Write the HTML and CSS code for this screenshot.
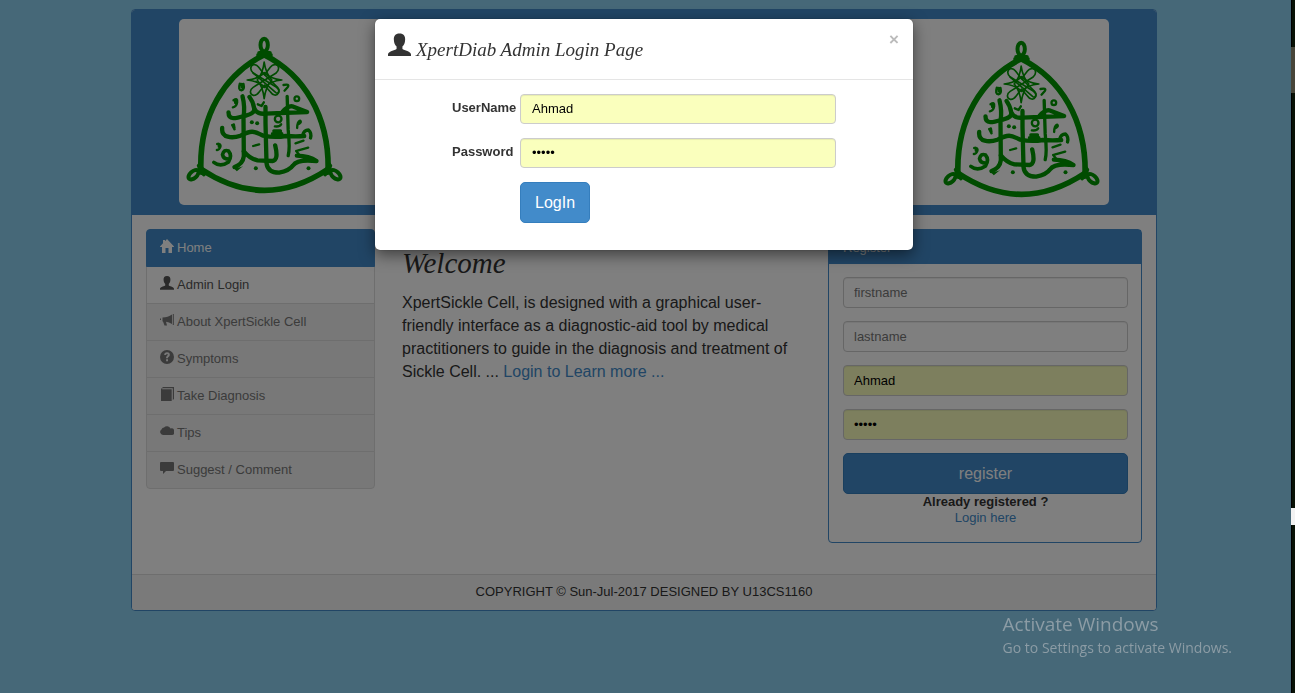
FILE: index.html
```html
<!DOCTYPE html>
<html lang="en">
<head>
<meta charset="utf-8">
<title>XpertSickle Cell</title>
<link rel="stylesheet" href="styles.css">
</head>
<body>
<svg class="sprite" aria-hidden="true">
  <symbol id="emblem" viewBox="200 109 468 474">
    <g fill="none" stroke="#009800" stroke-linecap="round" stroke-linejoin="round">
      <g stroke-width="17">
        <path d="M432 166C312 226 240 350 243 505"/>
        <path d="M434 166C554 226 626 350 625 505"/>
        <path d="M243 508Q434 636 625 508"/>
      </g>
      <g stroke-width="12">
        <ellipse cx="433" cy="136" rx="11" ry="19"/>
        <ellipse cx="221" cy="525" rx="10" ry="18" transform="rotate(48 221 525)"/>
        <ellipse cx="647" cy="525" rx="10" ry="18" transform="rotate(-48 647 525)"/>
        <path d="M418 160H450M415 166H453M240 494L252 524M237 498L245 520M628 494L616 524M631 498L624 520"/>
      </g>
      <g stroke-width="5">
        <path d="M434 225L416 202C407 190 392 194 393 207C393 213 396 216 400 220L468 279C476 284 480 273 474 264L434 225"/>
        <path d="M434 225L452 202C461 190 478 194 476 207C476 213 473 216 469 220L400 263C389 270 389 283 400 287C409 289 415 281 418 277L434 257"/>
        <path d="M434 257L452 277C458 287 471 290 476 280C480 272 475 266 469 262L400 220"/>
        <path d="M433 187Q438 222 456 241Q438 260 433 297Q429 260 412 241Q429 222 433 187Z"/>
        <path d="M382 241Q416 238 434 219Q452 238 486 241Q452 244 434 263Q416 244 382 241Z"/>
      </g>
      <g stroke-width="13">
        <path d="M368 290Q376 320 371 355L372 470Q369 494 344 502"/>
        <path d="M326 338C326 364 349 356 380 347Q406 341 403 326Q400 306 389 292"/>
        <path d="M403 326Q410 344 436 342L562 337Q540 329 517 320Q504 318 488 337"/>
        <path d="M437 322V370L440 490Q443 519 478 519Q508 514 520 497Q532 478 590 484Q568 469 531 468"/>
        <path d="M502 290L505 390Q511 448 505 468" stroke-width="10"/>
        <path d="M307 385C304 415 337 417 362 408C400 388 405 397 430 408Q465 415 498 409Q530 411 553 409"/>
        <path d="M548 408Q552 391 566 391Q576 400 572 415" stroke-width="10"/>
        <path d="M458 402H486M462 394H482" stroke-width="10"/>
        <path d="M372 455Q390 477 413 482L458 484Q477 482 466 437"/>
        <path d="M282 488Q302 504 326 487Q338 468 326 454Q312 448 308 465Q311 480 330 478" stroke-width="11"/>
      </g>
      <g stroke-width="7">
        <circle cx="475" cy="358" r="10"/>
        <circle cx="531" cy="297" r="7"/>
        <path d="M360 252Q354 271 365 272Q375 269 371 253M366 253V263"/>
        <path d="M491 256Q510 252 504 262L494 273"/>
        <path d="M341 302Q354 293 352 308Q350 321 339 323M346 302V310"/>
        <path d="M414 314L425 319L432 308M465 380Q479 382 484 374"/>
        <path d="M337 376L344 389M342 374L344 385M532 385Q532 366 541 363Q547 369 533 375"/>
        <path d="M292 433Q304 431 302 441Q298 452 291 451M297 433V441"/>
        <path d="M400 439L418 434M527 431L551 423M533 453L565 444M529 454L541 469"/>
      </g>
    </g>
    <g fill="#009800">
      <path d="M345 498Q356 508 370 499L351 515L338 502Z"/>
      <circle cx="396" cy="368" r="6"/><circle cx="412" cy="371" r="6"/>
      <circle cx="408" cy="506" r="6"/><circle cx="566" cy="506" r="6"/>
    </g>
  </symbol>
  <symbol id="user" viewBox="0 0 22 22">
    <path d="M11 0C7 0 5.400 2.500 5.600 6C5.800 9 6.500 11 8.200 12.500V14.800C5 16.600 0 17.300 0 20V21.500H22V20C22 17.300 17 16.600 13.800 14.800V12.500C15.500 11 16.200 9 16.400 6C16.600 2.500 15 0 11 0Z"/>
  </symbol>
  <symbol id="home" viewBox="0 0 14 14">
    <path d="M7 0L14 7.500V8H12V14H8.500V9H5.500V14H2V8H0V7.500L3 4.300V1H5V2.200Z"/>
  </symbol>
  <symbol id="horn" viewBox="0 0 14 14">
    <path d="M12.800 1H13.800V12H12.800ZM2.500 4.500Q8 4.500 12 1.500V11Q9 9.200 6 8.700L7 12.500H4.500L3 8.500H2.500ZM0 5.500H1V7H0Z"/>
  </symbol>
  <symbol id="help" viewBox="0 0 14 14">
    <path fill-rule="evenodd" d="M7 0A7 7 0 1 1 7 14A7 7 0 1 1 7 0ZM4.200 5H6.100Q6.200 3.900 7 3.900Q8.100 4 7.700 5L6.100 7V8.300H8V7.500L9.600 5.900Q10.600 2.300 7 2.300Q4.300 2.300 4.200 5ZM6.100 9.300V11.300H8V9.300Z"/>
  </symbol>
  <symbol id="book" viewBox="0 0 14 14">
    <path d="M3 0H14V12L12.800 13V1.200H2.200V2.200H11.700V14H1V2Z"/>
  </symbol>
  <symbol id="cloud" viewBox="0 0 14 14">
    <path d="M3 11A3 3 0 0 1 1.500 5.500A3 3 0 0 1 4 3.500A4 4 0 0 1 10.500 4.500A3.300 3.300 0 0 1 12 11Z"/>
  </symbol>
  <symbol id="comment" viewBox="0 0 14 14">
    <path d="M1 1H13Q14 1 14 2V9Q14 10 13 10H6L3 13V10H1Q0 10 0 9V2Q0 1 1 1Z"/>
  </symbol>
</svg>

<div class="page">
  <div class="panel">
    <header class="banner">
      <div class="banner-box">
        <svg class="emblem" role="img" aria-label="University emblem"><use href="#emblem"/></svg>
        <svg class="emblem emblem-end" role="img" aria-label="University emblem"><use href="#emblem"/></svg>
      </div>
    </header>
    <main class="columns">
      <nav class="menu">
        <a href="#" class="active"><svg class="icon"><use href="#home"/></svg>Home</a>
        <a href="#" class="enabled"><svg class="icon"><use href="#user"/></svg>Admin Login</a>
        <a href="#"><svg class="icon"><use href="#horn"/></svg>About XpertSickle Cell</a>
        <a href="#"><svg class="icon"><use href="#help"/></svg>Symptoms</a>
        <a href="#"><svg class="icon"><use href="#book"/></svg>Take Diagnosis</a>
        <a href="#"><svg class="icon"><use href="#cloud"/></svg>Tips</a>
        <a href="#"><svg class="icon"><use href="#comment"/></svg>Suggest / Comment</a>
      </nav>
      <section class="intro">
        <h1>Welcome</h1>
        <p>XpertSickle Cell, is designed with a graphical user-friendly interface as a diagnostic-aid tool by medical practitioners to guide in the diagnosis and treatment of Sickle Cell. ... <a href="#">Login to Learn more ...</a></p>
      </section>
      <section class="signup">
        <h2>Register</h2>
        <form class="signup-form">
          <input class="field" type="text" placeholder="firstname" aria-label="First name">
          <input class="field" type="text" placeholder="lastname" aria-label="Last name">
          <input class="field filled" type="text" value="Ahmad" aria-label="Username">
          <input class="field filled" type="password" value="ahmad" aria-label="Password">
          <div class="signup-end">
            <button class="button" type="button">register</button>
            <strong>Already registered ?</strong>
            <a href="#">Login here</a>
          </div>
        </form>
      </section>
    </main>
    <footer class="footer">COPYRIGHT © Sun-Jul-2017 DESIGNED BY U13CS1160</footer>
  </div>
</div>

<div class="backdrop"></div>
<div class="modal" role="dialog" aria-labelledby="login-title">
  <div class="modal-head">
    <svg class="title-icon"><use href="#user"/></svg>
    <h2 id="login-title">XpertDiab Admin Login Page</h2>
    <button class="close" type="button" aria-label="Close">×</button>
  </div>
  <form class="login-form">
    <label for="user-name">UserName</label>
    <input class="field filled" id="user-name" type="text" value="Ahmad">
    <label for="pass">Password</label>
    <input class="field filled" id="pass" type="password" value="ahmad">
    <button class="button" type="button">LogIn</button>
  </form>
</div>

<aside class="watermark">
  <div class="watermark-title">Activate Windows</div>
  <div>Go to Settings to activate Windows.</div>
</aside>
<div class="edge"><div class="edge-thumb"></div><div class="edge-mark"></div></div>
</body>
</html>
```
FILE: styles.css
```css
* { box-sizing: border-box; }

body {
  margin: 0;
  min-height: 100vh;
  background: #8cd0f0;
  color: #333;
  font: 13px/18px "Liberation Sans", Arial, sans-serif;
}

a { color: #428bca; text-decoration: none; }
svg { fill: currentColor; }
.sprite { position: absolute; width: 0; height: 0; }

.page { padding: 9px 7px 0 0; }

.panel {
  max-width: 1026px;
  margin: 0 auto;
  overflow: hidden;
  background: #fff;
  border: 1px solid #428bca;
  border-radius: 4px;
}

.banner { padding: 9px 47px 10px; background: #428bca; }

.banner-box {
  display: flex;
  justify-content: space-between;
  align-items: flex-start;
  padding: 17px 9px 7px 7px;
  background: #fff;
  border-radius: 5px;
}

.emblem { width: 157px; height: 158px; }
.emblem-end { margin-top: 4px; }

.columns {
  display: grid;
  grid-template-columns: 229fr 399fr 314fr;
  gap: 27px;
  align-items: start;
  padding: 14px 14px 31px;
}

.menu { display: flex; flex-direction: column; }

.menu a {
  display: flex;
  align-items: flex-start;
  gap: 3px;
  margin-bottom: -1px;
  padding: 9px 13px;
  background: #f0f0f0;
  border: 1px solid #ddd;
  color: #777;
}

.menu a:first-child { border-radius: 4px 4px 0 0; }
.menu a:last-child { margin-bottom: 0; border-radius: 0 0 4px 4px; }
.menu .active { z-index: 1; background: #428bca; border-color: #428bca; color: #fff; }
.menu .enabled { background: #fff; color: #555; }
.icon { width: 14px; height: 14px; }

.intro h1 {
  margin: 16px 0 10px;
  font: italic 29px/36px "Monotype Corsiva", "Liberation Serif", serif;
}

.intro p { margin: 0; font-size: 16px; line-height: 23px; }

.signup { border: 1px solid #428bca; border-radius: 4px; }

.signup h2 {
  margin: 0;
  padding: 9px 14px 7px;
  background: #428bca;
  color: #fff;
  font-size: 13px;
  font-weight: 400;
  line-height: 18px;
}

.signup-form {
  display: flex;
  flex-direction: column;
  gap: 13px;
  padding: 13px 13px 16px 14px;
}

.signup-end {
  display: flex;
  flex-direction: column;
  align-items: center;
  line-height: 16px;
}

.signup-end .button { width: 100%; }

.field {
  width: 100%;
  height: 31px;
  padding: 5px 10px;
  background: #fff;
  border: 1px solid #ccc;
  border-radius: 4px;
  box-shadow: inset 0 1px 1px rgba(0, 0, 0, .075);
  color: #000;
  font: inherit;
}

.field::placeholder { color: #777; }
.filled { background: #faffbd; }

.button {
  padding: 8px 14px;
  background: #428bca;
  border: 1px solid #357ebd;
  border-radius: 5px;
  color: #fff;
  font: 16px/23px "Liberation Sans", Arial, sans-serif;
}

.footer {
  padding: 7px 8px 9px;
  background: #f5f5f5;
  border-top: 1px solid #ddd;
  line-height: 19px;
  text-align: center;
}

.backdrop { position: fixed; z-index: 2; inset: 0; background: rgba(0, 0, 0, .5); }

.modal {
  position: absolute;
  z-index: 3;
  top: 19px;
  left: 0;
  right: 7px;
  max-width: 538px;
  margin: 0 auto;
  background: #fff;
  border-radius: 5px;
  box-shadow: 0 5px 15px rgba(0, 0, 0, .5), 0 0 1px rgba(0, 0, 0, .6);
}

.modal-head {
  display: flex;
  align-items: flex-start;
  gap: 5px;
  padding: 14px 14px 13px 13px;
  border-bottom: 1px solid #e5e5e5;
}

.title-icon { width: 23px; height: 24px; }

.modal-head h2 {
  flex: 1;
  margin: 0;
  font: italic 19px/33px "Monotype Corsiva", "Liberation Serif", serif;
}

.close {
  padding: 0;
  background: none;
  border: 0;
  color: #bbb;
  font: bold 17px/14px "Liberation Sans", Arial, sans-serif;
}

.login-form {
  display: grid;
  grid-template-columns: 68px 316px;
  row-gap: 14px;
  padding: 14px 77px 27px;
}

.login-form label { padding-top: 5px; font-weight: 700; }
.login-form .field { height: 30px; padding: 4px 11px 6px; }
.login-form .button { grid-column: 2; justify-self: start; }

.watermark {
  position: fixed;
  z-index: 4;
  right: 63px;
  bottom: 35px;
  color: #8c9ca5;
  font: 14px/20px "Open Sans", sans-serif;
}

.watermark-title { font-size: 19px; line-height: 27px; }

.edge {
  position: fixed;
  z-index: 4;
  inset: 0 0 0 auto;
  width: 4px;
  background: #081206;
  border-left: 1px solid #000;
}

.edge-thumb { height: 46px; margin: 47px 0 415px -1px; background: #474539; }
.edge-mark { height: 17px; margin-left: -1px; background: #f2f2f2; }
```
